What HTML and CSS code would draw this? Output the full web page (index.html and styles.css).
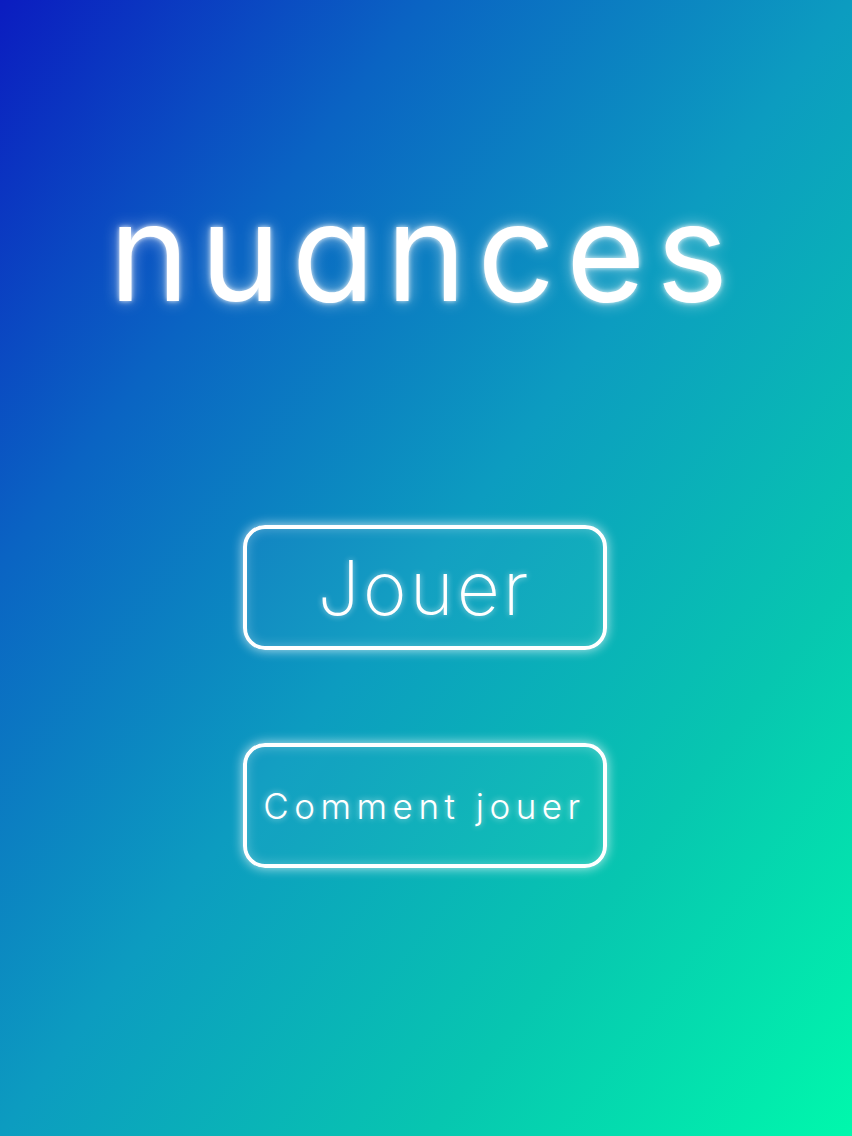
FILE: index.html
```html
<!DOCTYPE html>
<html lang="fr">
<head>
    <meta charset="UTF-8">
    <title>nuances</title>
    <link rel="stylesheet" href="styles.css">
</head>
<body>
    <!-- écran d'accueil -->
    <main class="menu">
        <h1 class="title">nuances</h1>

        <nav class="actions">
            <button class="btn btn-play">Jouer</button>
            <button class="btn btn-help">Comment jouer</button>
        </nav>
    </main>
</body>
</html>
```

FILE: styles.css
```css
/* base */
* {
    box-sizing: border-box;
    margin: 0;
    padding: 0;
}

html, body {
    height: 100%;
}

body {
    font-family: Inter, "Noto Sans", sans-serif;
    font-feature-settings: "cv11" 1;
    color: #fff;
    background: linear-gradient(to bottom right, #0b1cc0 0%, #0a64c3 25%, #0c9cc0 50%, #07c6b0 75%, #00f8ac 100%);
    overflow: hidden;
}

/* écran principal */
.menu {
    display: flex;
    flex-direction: column;
    align-items: center;
    height: 100%;
    padding-top: 184px;
}

.title {
    font-size: 136px;
    font-weight: 370;
    line-height: 1;
    letter-spacing: 11px;
    margin-right: 4px;
    text-shadow: 0 0 5px rgba(255, 255, 255, 0.85), 0 0 16px rgba(255, 255, 255, 0.55);
}

/* boutons */
.actions {
    display: flex;
    flex-direction: column;
    gap: 93px;
    margin-top: 205px;
    margin-right: 3px;
}

.btn {
    display: flex;
    align-items: center;
    justify-content: center;
    width: 364px;
    height: 125px;
    border: 4px solid #fff;
    border-radius: 22px;
    background: rgba(255, 255, 255, 0.03);
    color: #fff;
    font-family: inherit;
    font-feature-settings: inherit;
    font-weight: 300;
    cursor: pointer;
    box-shadow: 0 0 12px rgba(255, 255, 255, 0.75), inset 0 0 12px rgba(255, 255, 255, 0.3);
    text-shadow: 0 0 6px rgba(255, 255, 255, 0.6);
}

.btn-play {
    font-size: 75px;
    font-weight: 200;
    letter-spacing: 3px;
}

.btn-help {
    font-size: 35px;
    letter-spacing: 5.5px;
}
```
